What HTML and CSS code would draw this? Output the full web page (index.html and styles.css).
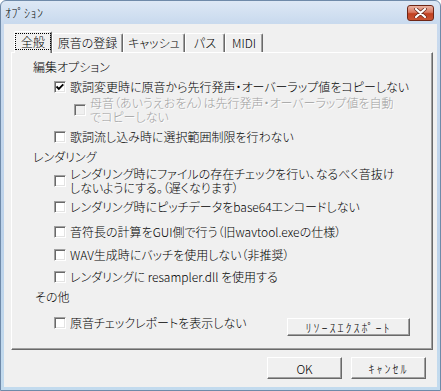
FILE: index.html
```html
<!DOCTYPE html>
<html lang="ja">
<head>
    <meta charset="UTF-8">
    <title>オプション</title>
    <link rel="stylesheet" href="styles.css">
</head>
<body>
    <div class="window">
        <div class="titlebar">
            <span class="title">ｵﾌﾟｼｮﾝ</span>
            <button class="close" aria-label="閉じる">
                <svg width="13" height="10" viewBox="0 0 13 10">
                    <path d="M2 1 L11 9 M11 1 L2 9" stroke="#6a2a1c" stroke-width="3.6" stroke-linecap="round"/>
                    <path d="M2 1 L11 9 M11 1 L2 9" stroke="#fff" stroke-width="2.2" stroke-linecap="round"/>
                </svg>
            </button>
        </div>

        <div class="client">
            <div class="tabs">
                <div class="tab active" style="width:38px"><span class="focus">全般</span></div>
                <div class="tab" style="width:71px">原音の登録</div>
                <div class="tab" style="width:62px">キャッシュ</div>
                <div class="tab" style="width:40px">パス</div>
                <div class="tab" style="width:38px">MIDI</div>
            </div>

            <div class="panel">
                <div class="group g-edit">編集オプション</div>
                <div class="opt o-1">
                    <span class="box">
                        <svg width="10" height="10" viewBox="0 0 10 10"><path d="M1.5 4.5 L3.8 6.8 L8.3 2.3" fill="none" stroke="#000" stroke-width="1.9"/></svg>
                    </span>
                    <span>歌詞変更時に原音から先行発声・オーバーラップ値をコピーしない</span>
                </div>
                <div class="opt sub disabled o-2">
                    <span class="box"></span>
                    <span class="two">母音（あいうえおをん）は先行発声・オーバーラップ値を自動<br>でコピーしない</span>
                </div>
                <div class="opt o-3">
                    <span class="box"></span>
                    <span>歌詞流し込み時に選択範囲制限を行わない</span>
                </div>

                <div class="group g-render">レンダリング</div>
                <div class="opt r-1">
                    <span class="box"></span>
                    <span class="two">レンダリング時にファイルの存在チェックを行い、なるべく音抜け<br>しないようにする。（遅くなります）</span>
                </div>
                <div class="opt r-2">
                    <span class="box"></span>
                    <span>レンダリング時にピッチデータをbase64エンコードしない</span>
                </div>
                <div class="opt r-3">
                    <span class="box"></span>
                    <span>音符長の計算をGUI側で行う（旧wavtool.exeの仕様）</span>
                </div>
                <div class="opt r-4">
                    <span class="box"></span>
                    <span>WAV生成時にバッチを使用しない（非推奨）</span>
                </div>
                <div class="opt r-5">
                    <span class="box"></span>
                    <span>レンダリングに resampler.dll を使用する</span>
                </div>

                <div class="group g-other">その他</div>
                <div class="last-row">
                    <div class="opt">
                        <span class="box"></span>
                        <span>原音チェックレポートを表示しない</span>
                    </div>
                    <button class="btn export">ﾘｿｰｽｴｸｽﾎﾟｰﾄ</button>
                </div>
            </div>

            <div class="footer">
                <button class="btn">OK</button>
                <button class="btn cancel">ｷｬﾝｾﾙ</button>
            </div>
        </div>
    </div>
</body>
</html>
```

FILE: styles.css
```css
body {
    margin: 0;
    font-family: "Noto Sans CJK JP", sans-serif;
    font-size: 12px;
    font-weight: 300;
    line-height: 13px;
    color: #000;
    font-feature-settings: "palt";
}
.window {
    width: 441px;
    height: 391px;
    box-sizing: border-box;
    border: 1px solid #6f8aa9;
    border-radius: 6px 6px 0 0;
    background: linear-gradient(#dde8f5, #c9daee 22px, #bcd2ea 60%, #c3dbee);
    display: flex;
    flex-direction: column;
}
.titlebar {
    height: 23px;
    display: flex;
    align-items: center;
    justify-content: space-between;
    padding: 0 6px 0 4px;
}
.title {
    font-feature-settings: normal;
    letter-spacing: 0.5px;
}
.close {
    width: 27px;
    height: 16px;
    padding: 0;
    border: 1px solid #6e2616;
    border-radius: 3px;
    background: linear-gradient(#eab3a3, #d9775f 45%, #c2401f 55%, #c85434);
    display: flex;
    align-items: center;
    justify-content: center;
}
.client {
    flex: 1;
    margin: 0 3px 3px;
    background: #f0f0f0;
    padding-top: 7px;
}
.tabs {
    display: flex;
    align-items: flex-end;
    height: 21px;
    padding-left: 10px;
}
.tab {
    height: 19px;
    box-sizing: border-box;
    border: 1px solid;
    border-color: #fff #696969 transparent #fff;
    border-bottom: none;
    border-radius: 2px 2px 0 0;
    box-shadow: inset -1px 0 0 #a0a0a0;
    text-align: center;
    line-height: 17px;
    flex: none;
}
.tab.active {
    height: 22px;
    margin-bottom: -1px;
    position: relative;
    background: #f0f0f0;
    z-index: 1;
}
.focus {
    display: block;
    margin: 1px 0 0;
    height: 17px;
    box-sizing: border-box;
    border: 1px dotted #000;
    line-height: 15px;
}
.panel {
    margin-left: 7px;
    width: 422px;
    height: 298px;
    box-sizing: border-box;
    border: 1px solid;
    border-color: #fff #696969 #696969 #fff;
    box-shadow: inset -1px -1px 0 #a0a0a0;
    padding-left: 21px;
}
.group { height: 13px; }
.g-edit { margin-top: 7px; }
.g-render { margin-top: 7px; }
.g-other { margin-top: 7px; margin-left: 2px; }

.opt {
    display: flex;
    align-items: center;
    margin-left: 21px;
}
.opt.sub { margin-left: 41px; }
.two { line-height: 14px; }
.box {
    width: 12px;
    height: 12px;
    box-sizing: border-box;
    flex: none;
    margin-right: 4px;
    background: #fff;
    border: 1px solid;
    border-color: #a0a0a0 #fff #fff #a0a0a0;
    box-shadow: inset 1px 1px 0 #696969, inset -1px -1px 0 #e3e3e3;
    display: flex;
    align-items: center;
    justify-content: center;
}
.disabled { color: #a0a0a0; text-shadow: 1px 1px 0 #fff; }
.disabled .box { background: #f0f0f0; }

.o-1 { margin-top: 7px; }
.o-2 { margin-top: 3px; }
.o-3 { margin-top: 6px; }
.r-1 { margin-top: 4px; }
.r-2 { margin-top: 5px; }
.r-3 { margin-top: 12px; }
.r-4 { margin-top: 10px; }
.r-5 { margin-top: 9px; }

.last-row {
    display: flex;
    justify-content: space-between;
    align-items: flex-start;
    margin-top: 13px;
    margin-right: 22px;
}
.btn {
    width: 75px;
    height: 22px;
    box-sizing: border-box;
    padding: 0;
    background: #f0f0f0;
    border: 1px solid;
    border-color: #fff #696969 #696969 #fff;
    box-shadow: inset -1px -1px 0 #a0a0a0;
    font: inherit;
    line-height: 13px;
    color: #000;
}
.export {
    width: 123px;
    height: 18px;
    margin-top: 2px;
    letter-spacing: 2px;
    font-feature-settings: normal;
}
.cancel {
    letter-spacing: 2px;
    font-feature-settings: normal;
}
.footer {
    display: flex;
    justify-content: flex-end;
    gap: 9px;
    margin-top: 7px;
    padding-right: 11px;
}
```
